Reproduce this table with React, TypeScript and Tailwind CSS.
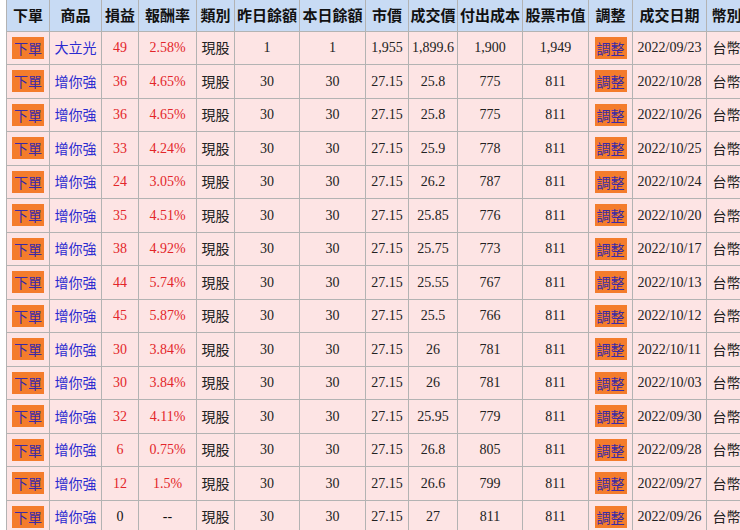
import React from "react";

type Row = {
  name: string;
  pl: string;
  rate: string;
  prev: string;
  today: string;
  price: string;
  deal: string;
  cost: string;
  value: string;
  date: string;
};

const rows: Row[] = [
  { name: "大立光", pl: "49", rate: "2.58%", prev: "1", today: "1", price: "1,955", deal: "1,899.6", cost: "1,900", value: "1,949", date: "2022/09/23" },
  { name: "增你強", pl: "36", rate: "4.65%", prev: "30", today: "30", price: "27.15", deal: "25.8", cost: "775", value: "811", date: "2022/10/28" },
  { name: "增你強", pl: "36", rate: "4.65%", prev: "30", today: "30", price: "27.15", deal: "25.8", cost: "775", value: "811", date: "2022/10/26" },
  { name: "增你強", pl: "33", rate: "4.24%", prev: "30", today: "30", price: "27.15", deal: "25.9", cost: "778", value: "811", date: "2022/10/25" },
  { name: "增你強", pl: "24", rate: "3.05%", prev: "30", today: "30", price: "27.15", deal: "26.2", cost: "787", value: "811", date: "2022/10/24" },
  { name: "增你強", pl: "35", rate: "4.51%", prev: "30", today: "30", price: "27.15", deal: "25.85", cost: "776", value: "811", date: "2022/10/20" },
  { name: "增你強", pl: "38", rate: "4.92%", prev: "30", today: "30", price: "27.15", deal: "25.75", cost: "773", value: "811", date: "2022/10/17" },
  { name: "增你強", pl: "44", rate: "5.74%", prev: "30", today: "30", price: "27.15", deal: "25.55", cost: "767", value: "811", date: "2022/10/13" },
  { name: "增你強", pl: "45", rate: "5.87%", prev: "30", today: "30", price: "27.15", deal: "25.5", cost: "766", value: "811", date: "2022/10/12" },
  { name: "增你強", pl: "30", rate: "3.84%", prev: "30", today: "30", price: "27.15", deal: "26", cost: "781", value: "811", date: "2022/10/11" },
  { name: "增你強", pl: "30", rate: "3.84%", prev: "30", today: "30", price: "27.15", deal: "26", cost: "781", value: "811", date: "2022/10/03" },
  { name: "增你強", pl: "32", rate: "4.11%", prev: "30", today: "30", price: "27.15", deal: "25.95", cost: "779", value: "811", date: "2022/09/30" },
  { name: "增你強", pl: "6", rate: "0.75%", prev: "30", today: "30", price: "27.15", deal: "26.8", cost: "805", value: "811", date: "2022/09/28" },
  { name: "增你強", pl: "12", rate: "1.5%", prev: "30", today: "30", price: "27.15", deal: "26.6", cost: "799", value: "811", date: "2022/09/27" },
  { name: "增你強", pl: "0", rate: "--", prev: "30", today: "30", price: "27.15", deal: "27", cost: "811", value: "811", date: "2022/09/26" },
];

const headers = ["下單", "商品", "損益", "報酬率", "類別", "昨日餘額", "本日餘額", "市價", "成交價", "付出成本", "股票市值", "調整", "成交日期", "幣別"];
const widths = [43, 52, 37, 58, 38, 65, 66, 43, 49, 65, 66, 44, 74, 40];

const sans = "font-['Noto_Sans_CJK_TC','Noto_Sans',sans-serif]";
const serif = "font-['Liberation_Serif','Noto_Sans_CJK_TC',serif]";

function Btn({ label }: { label: string }) {
  return (
    <span className={`inline-flex items-center justify-center w-[32px] h-[22px] bg-[#f47c2c] text-[#3b2aa6] text-[14px] leading-none ${sans}`}>
      {label}
    </span>
  );
}

export default function App() {
  const td = "border border-[#b3b3b3] p-0 h-[33.5px] text-center align-middle whitespace-nowrap";
  return (
    <div className="w-[740px] h-[530px] overflow-hidden bg-white pl-[6px]">
      <table className="border-collapse table-fixed w-[740px]">
        <colgroup>
          {widths.map((w, i) => (
            <col key={i} style={{ width: w }} />
          ))}
        </colgroup>
        <thead>
          <tr>
            {headers.map((h) => (
              <th
                key={h}
                className={`border border-[#b3b3b3] border-t-0 p-0 h-[31px] bg-[#c8dbf4] text-center text-[15px] font-semibold text-[#111] whitespace-nowrap ${sans}`}
              >
                {h}
              </th>
            ))}
          </tr>
        </thead>
        <tbody>
          {rows.map((r, i) => {
            const red = r.pl !== "0";
            return (
              <tr key={i} className="bg-[#fde4e4]">
                <td className={td}>
                  <Btn label="下單" />
                </td>
                <td className={`${td} ${sans} text-[14px] text-[#2b2bd0]`}>{r.name}</td>
                <td className={`${td} ${serif} text-[14px] ${red ? "text-[#e3262a]" : "text-[#111]"}`}>{r.pl}</td>
                <td className={`${td} ${serif} text-[14px] ${red ? "text-[#e3262a]" : "text-[#111]"}`}>{r.rate}</td>
                <td className={`${td} ${sans} text-[14px] text-[#222]`}>現股</td>
                <td className={`${td} ${serif} text-[14px] text-[#222]`}>{r.prev}</td>
                <td className={`${td} ${serif} text-[14px] text-[#222]`}>{r.today}</td>
                <td className={`${td} ${serif} text-[14px] text-[#222]`}>{r.price}</td>
                <td className={`${td} ${serif} text-[14px] text-[#222]`}>{r.deal}</td>
                <td className={`${td} ${serif} text-[14px] text-[#222]`}>{r.cost}</td>
                <td className={`${td} ${serif} text-[14px] text-[#222]`}>{r.value}</td>
                <td className={td}>
                  <Btn label="調整" />
                </td>
                <td className={`${td} ${serif} text-[14px] text-[#222]`}>{r.date}</td>
                <td className={`${td} ${sans} text-[14px] text-[#222]`}>台幣</td>
              </tr>
            );
          })}
        </tbody>
      </table>
    </div>
  );
}
